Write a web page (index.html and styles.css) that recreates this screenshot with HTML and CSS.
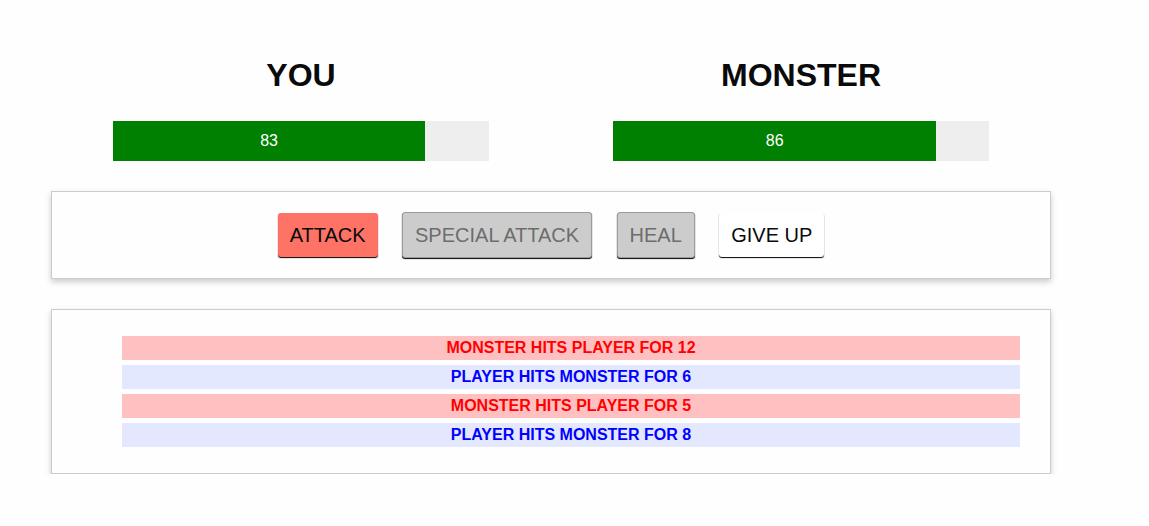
FILE: index.html
```html
<!DOCTYPE html>
<html>
<head>
<meta charset="utf-8">
<link rel="stylesheet" href="styles.css">
</head>
<body>
<div class="app">
  <section class="players">
    <div class="player">
      <h1 class="name">YOU</h1>
      <div class="healthbar"><div class="health" style="width: 83%">83</div></div>
    </div>
    <div class="player">
      <h1 class="name">MONSTER</h1>
      <div class="healthbar"><div class="health" style="width: 86%">86</div></div>
    </div>
  </section>
  <section class="controls">
    <button class="btn btn-attack">ATTACK</button>
    <button class="btn btn-disabled" disabled>SPECIAL ATTACK</button>
    <button class="btn btn-disabled" disabled>HEAL</button>
    <button class="btn btn-giveup">GIVE UP</button>
  </section>
  <section class="log">
    <ul class="log-list">
      <li class="entry monster-turn">Monster hits Player for 12</li>
      <li class="entry player-turn">Player hits Monster for 6</li>
      <li class="entry monster-turn">Monster hits Player for 5</li>
      <li class="entry player-turn">Player hits Monster for 8</li>
    </ul>
  </section>
</div>
</body>
</html>
```
FILE: styles.css
```css
html, body {
  margin: 0;
  padding: 0;
}
body {
  background: #fefefe;
  color: #0a0a0a;
  font-family: "Liberation Sans", Arial, sans-serif;
  font-size: 16px;
  line-height: 1.5;
}
.app {
  width: 1000px;
  margin-left: 51px;
}
.players {
  display: grid;
  grid-template-columns: 1fr 1fr;
  padding-top: 53px;
}
.player {
  padding: 0 15px;
  text-align: center;
}
.name {
  margin: 0 0 24px;
  font-size: 32px;
  line-height: 44px;
  font-weight: bold;
  color: #0a0a0a;
}
.healthbar {
  width: 80%;
  height: 40px;
  margin: 0 auto;
  background: #eeeeee;
}
.health {
  height: 40px;
  line-height: 39px;
  background: green;
  color: #fff;
  text-align: center;
}
.controls {
  margin-top: 30px;
  padding: 20px 10px;
  border: 1px solid #ccc;
  box-shadow: 0 3px 6px #ccc;
  display: flex;
  justify-content: center;
  align-items: center;
  gap: 24.4px;
  background: #fefefe;
}
.btn {
  font-family: "Liberation Sans", Arial, sans-serif;
  font-size: 20px;
  line-height: 20px;
  padding: 12px;
  border: none;
  border-radius: 3px;
  box-shadow: 0 1px 1px black;
  color: #0a0a0a;
  margin: 0;
}
.btn-attack {
  background: #ff7367;
}
.btn-giveup {
  background: #ffffff;
}
.btn-disabled {
  background: #cccccc;
  color: #6d6d6d;
  border: 1px solid #9a9a9a;
}
.log {
  margin-top: 30px;
  padding: 26px 30px;
  border: 1px solid #ccc;
  box-shadow: 0 3px 6px #ccc;
  background: #fefefe;
}
.log-list {
  list-style: none;
  margin: 0;
  padding: 0 0 0 40px;
  display: flex;
  flex-direction: column;
  gap: 5px;
  font-weight: bold;
  text-transform: uppercase;
  text-align: center;
}
.entry {
  height: 24px;
  line-height: 24px;
}
.player-turn {
  color: blue;
  background: #e4e8ff;
}
.monster-turn {
  color: red;
  background: #ffc0c1;
}
```
